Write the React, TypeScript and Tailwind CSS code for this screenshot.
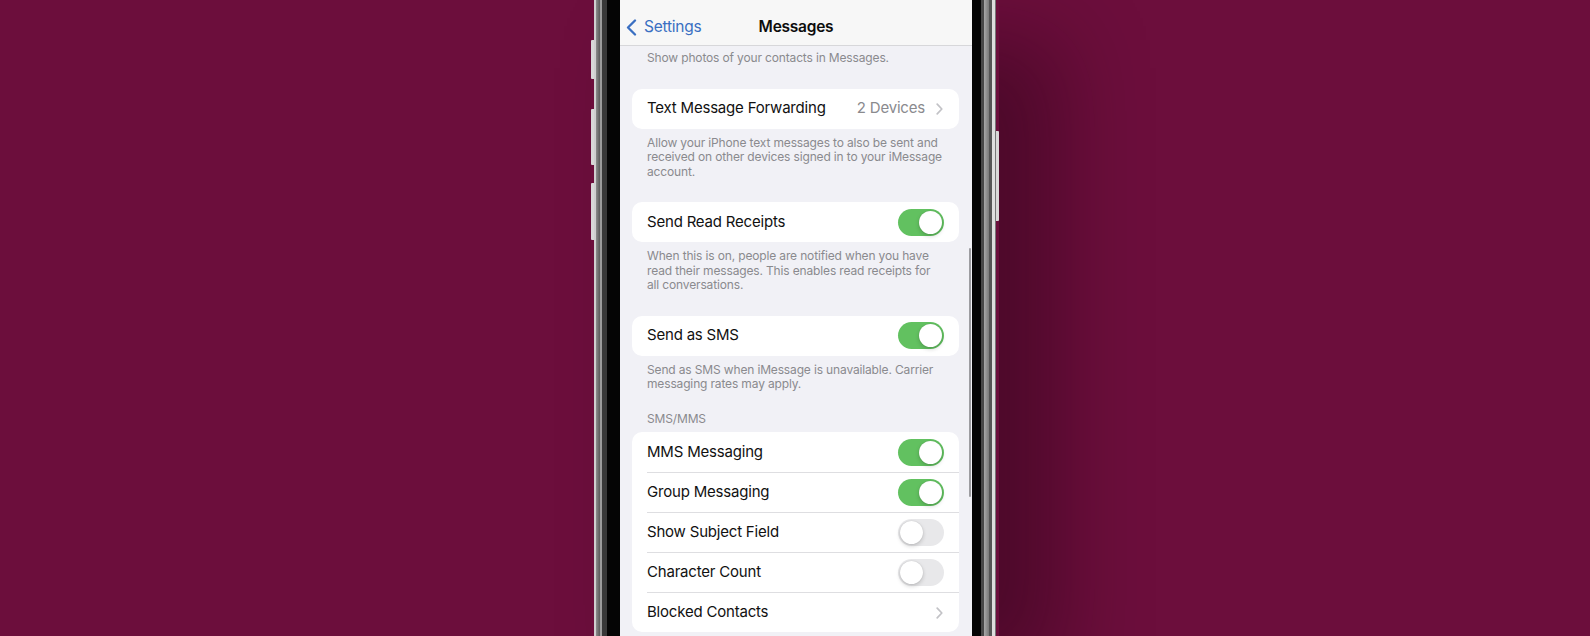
import React from 'react'

type Row = {
  label: string
  toggle?: boolean
  on?: boolean
  detail?: string
  chevron?: boolean
}

const smsRows: Row[] = [
  { label: 'MMS Messaging', toggle: true, on: true },
  { label: 'Group Messaging', toggle: true, on: true },
  { label: 'Show Subject Field', toggle: true, on: false },
  { label: 'Character Count', toggle: true, on: false },
  { label: 'Blocked Contacts', chevron: true },
]

function Toggle({ on }: { on: boolean }): React.JSX.Element {
  return (
    <span
      className={`flex h-[27px] w-[46px] shrink-0 items-center rounded-full p-[2px] ${
        on ? 'justify-end bg-[#62c160]' : 'justify-start bg-[#e8e8ea]'
      }`}
    >
      <span className="h-[23px] w-[23px] rounded-full bg-white shadow-[0_2px_4px_rgba(0,0,0,0.18),0_0_1px_rgba(0,0,0,0.2)]" />
    </span>
  )
}

function Chevron(): React.JSX.Element {
  return (
    <svg width="7" height="12" viewBox="0 0 7 12" fill="none">
      <path
        d="M1.2 1.2 5.8 6l-4.6 4.8"
        stroke="#c2c2c6"
        strokeWidth="1.7"
        strokeLinecap="round"
        strokeLinejoin="round"
      />
    </svg>
  )
}

function Card({ rows }: { rows: Row[] }): React.JSX.Element {
  return (
    <div className="ml-[12px] mr-[13px] rounded-[10px] bg-white">
      {rows.map((r, i) => (
        <div key={r.label} className="flex h-[40px] pl-[15px]">
          <div
            className={`flex flex-1 items-center pr-[15px] ${
              i > 0 ? 'border-t border-[#dedee1]' : ''
            }`}
          >
            <span className="flex-1 text-[15px] tracking-[-0.2px] text-[#111]">{r.label}</span>
            {r.detail && (
              <span className="mr-[11px] text-[15px] tracking-[-0.2px] text-[#8a8a8e]">
                {r.detail}
              </span>
            )}
            {r.toggle && <Toggle on={!!r.on} />}
            {(r.chevron || r.detail) && (
              <span className="mr-[1px] flex">
                <Chevron />
              </span>
            )}
          </div>
        </div>
      ))}
    </div>
  )
}

function Footer({ lines, first, last }: { lines: string[]; first?: boolean; last?: boolean }): React.JSX.Element {
  return (
    <div
      className={`px-[27px] text-[12px] leading-[14.5px] tracking-[-0.15px] text-[#8a8a8e] ${
        first ? 'mt-0' : 'mt-[7px]'
      } ${last ? 'mb-[20px]' : 'mb-[23px]'}`}
    >
      {lines.map((l) => (
        <span key={l} className="block whitespace-nowrap">
          {l}
        </span>
      ))}
    </div>
  )
}

function NavBar(): React.JSX.Element {
  return (
    <div className="grid h-[46px] grid-cols-[1fr_auto_1fr] items-center border-b border-[#d7d7da] bg-[#f7f7f7] pt-[9px]">
      <div className="flex items-center pl-[6px] text-[#3a6fc2]">
        <svg width="11" height="17" viewBox="0 0 11 17" fill="none">
          <path
            d="M9 1.5 2 8.5l7 7"
            stroke="currentColor"
            strokeWidth="2.3"
            strokeLinecap="round"
            strokeLinejoin="round"
          />
        </svg>
        <span className="ml-[7px] text-[15.5px] tracking-[-0.25px]">Settings</span>
      </div>
      <span className="text-[15.5px] font-semibold tracking-[-0.25px] text-[#0d0d0d]">Messages</span>
      <div />
    </div>
  )
}

function Screen(): React.JSX.Element {
  return (
    <div className="relative h-full w-[352px] shrink-0 overflow-hidden bg-[#f1f1f6]">
      <NavBar />
      <div className="pt-[5px]">
        <Footer first lines={['Show photos of your contacts in Messages.']} />
        <Card rows={[{ label: 'Text Message Forwarding', detail: '2 Devices' }]} />
        <Footer
          lines={[
            'Allow your iPhone text messages to also be sent and',
            'received on other devices signed in to your iMessage',
            'account.',
          ]}
        />
        <Card rows={[{ label: 'Send Read Receipts', toggle: true, on: true }]} />
        <Footer
          lines={[
            'When this is on, people are notified when you have',
            'read their messages. This enables read receipts for',
            'all conversations.',
          ]}
        />
        <Card rows={[{ label: 'Send as SMS', toggle: true, on: true }]} />
        <Footer
          last
          lines={[
            'Send as SMS when iMessage is unavailable. Carrier',
            'messaging rates may apply.',
          ]}
        />
        <div className="mb-[6px] px-[27px] text-[12px] leading-[14.5px] tracking-[-0.15px] text-[#8a8a8e]">SMS/MMS</div>
        <Card rows={smsRows} />
      </div>
      {/* scroll indicator */}
      <div className="absolute right-[1px] top-[248px] h-[249px] w-[2.5px] rounded-full bg-[#9d9da1]" />
    </div>
  )
}

export default function App(): React.JSX.Element {
  return (
    <div className="flex h-[636px] w-full justify-center overflow-hidden bg-[#6c0e3c] font-['Inter',sans-serif] antialiased">
      <div className="flex h-full shadow-[60px_40px_80px_rgba(25,0,12,0.38)]">
        {/* left side buttons */}
        <div className="flex w-[3px] flex-col">
          <div className="mt-[40px] h-[39px] rounded-l-[1px] bg-[#d8d8d8]" />
          <div className="mt-[30px] h-[56px] rounded-l-[1px] bg-[#d8d8d8]" />
          <div className="mt-[18px] h-[57px] rounded-l-[1px] bg-[#d8d8d8]" />
        </div>
        {/* left frame */}
        <div className="w-[2px] bg-[#cfcfcf]" />
        <div className="w-[4px] bg-gradient-to-r from-[#8c8c8c] to-[#5a5a5a]" />
        <div className="w-[2px] bg-[#9c9c9c]" />
        <div className="w-[5px] bg-[#383838]" />
        <div className="w-[13px] bg-[#050505]" />
        <Screen />
        {/* right frame */}
        <div className="w-[9px] bg-[#050505]" />
        <div className="w-[3px] bg-[#474747]" />
        <div className="w-[5px] bg-gradient-to-r from-[#a8a8a8] to-[#7a7a7a]" />
        <div className="w-[3px] bg-[#555]" />
        <div className="w-[3px] bg-[#dedede]" />
        <div className="w-[1px] bg-[#777]" />
        {/* right side button */}
        <div className="flex w-[3px] flex-col">
          <div className="mt-[131px] h-[90px] rounded-r-[1px] bg-[#d8d8d8]" />
        </div>
      </div>
    </div>
  )
}
